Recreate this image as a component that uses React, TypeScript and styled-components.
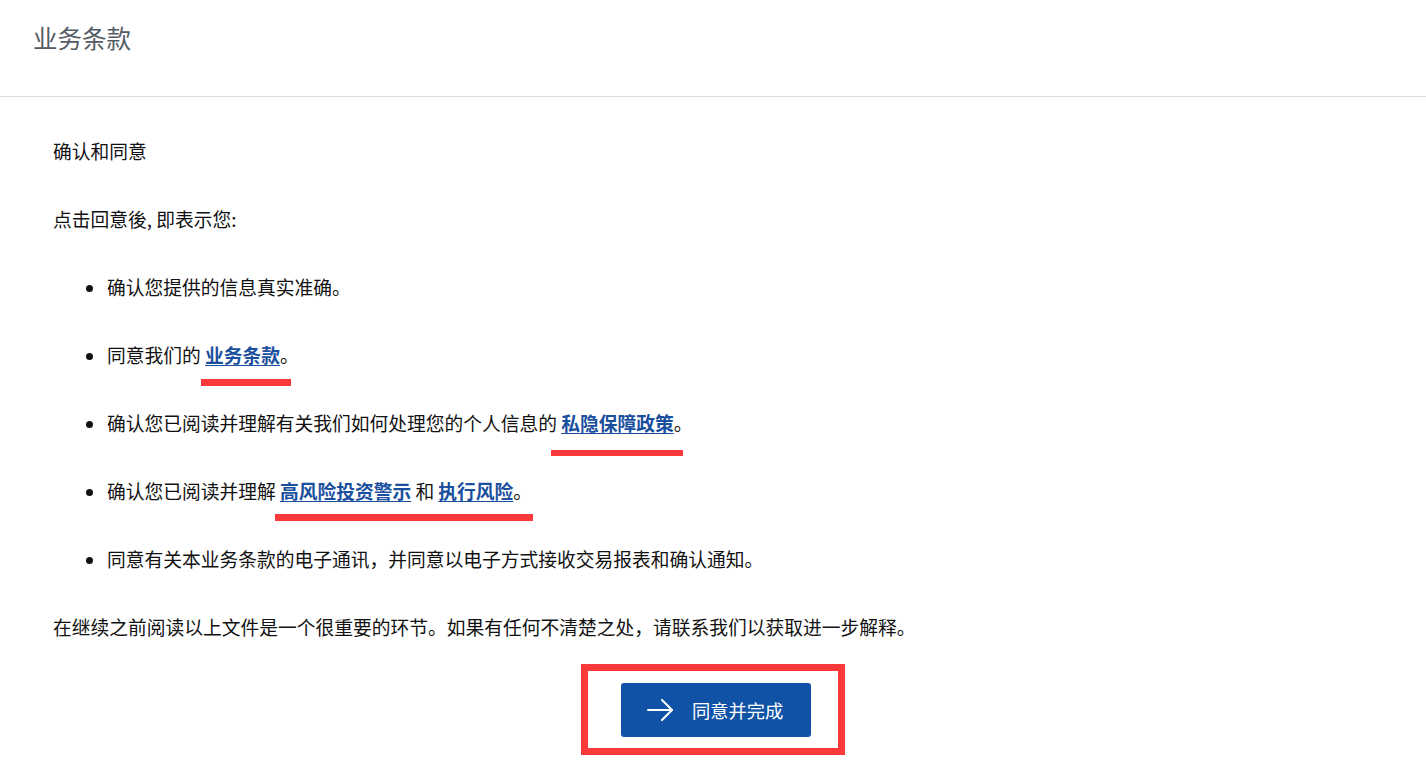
import styled, { createGlobalStyle } from 'styled-components';

const GlobalStyle = createGlobalStyle`
    html, body {
        margin: 0;
        padding: 0;
        background: #ffffff;
    }
    body {
        font-family: "Microsoft YaHei", "Noto Sans CJK SC", "Noto Sans", sans-serif;
        color: #111111;
    }
`

type Mark = { left: number; top: number; width: number; height: number };

const Term = ({ children, mark }: { children: string; mark: Mark }) => (
    <TermWrap>
        <Link href="#">{children}</Link>
        <RedMark $left={mark.left} $top={mark.top} $width={mark.width} $height={mark.height} />
    </TermWrap>
)

export default function App() {
    return (
        <>
            <GlobalStyle />
            <Page>
                <Header>
                    <Title>业务条款</Title>
                </Header>

                <Body>
                    <Para>确认和同意</Para>
                    <Para>点击回意後, 即表示您:</Para>

                    <List>
                        <Item>确认您提供的信息真实准确。</Item>
                        <Item>
                            同意我们的 <Term mark={{ left: -4, top: 38, width: 90, height: 7 }}>业务条款</Term>。
                        </Item>
                        <Item>
                            确认您已阅读并理解有关我们如何处理您的个人信息的{' '}
                            <Term mark={{ left: -10, top: 41, width: 132, height: 6 }}>私隐保障政策</Term>。
                        </Item>
                        <Item>
                            确认您已阅读并理解{' '}
                            <Term mark={{ left: -5, top: 37, width: 258, height: 7 }}>高风险投资警示</Term>{' '}
                            和 <Link href="#">执行风险</Link>。
                        </Item>
                        <Item>同意有关本业务条款的电子通讯，并同意以电子方式接收交易报表和确认通知。</Item>
                    </List>

                    <Para>在继续之前阅读以上文件是一个很重要的环节。如果有任何不清楚之处，请联系我们以获取进一步解释。</Para>

                    <ActionRow>
                        <Highlight>
                            <AgreeButton type="button">
                                <svg width="27" height="22" viewBox="0 0 27 22" fill="none">
                                    <path d="M1 11h24" stroke="#ffffff" strokeWidth="2" strokeLinecap="round" />
                                    <path d="M15 1l10 10-10 10" stroke="#ffffff" strokeWidth="2" strokeLinecap="round" strokeLinejoin="round" />
                                </svg>
                                同意并完成
                            </AgreeButton>
                        </Highlight>
                    </ActionRow>
                </Body>
            </Page>
        </>
    )
}

const Page = styled.div`
    width: 1426px;
    min-height: 780px;
    background: #ffffff;
`

const Header = styled.header`
    height: 97px;
    box-sizing: border-box;
    padding: 22px 33px 0;
    border-bottom: 1px solid #d6dae2;
`

const Title = styled.h1`
    margin: 0;
    font-size: 24.5px;
    line-height: 32px;
    font-weight: 400;
    color: #545b64;
`

const Body = styled.main`
    padding: 40px 53px 0;
    display: flex;
    flex-direction: column;
    gap: 40px;
    font-size: 18.75px;
    line-height: 28px;
`

const Para = styled.p`
    margin: 0;
`

const List = styled.ul`
    margin: 0;
    padding-left: 54px;
    display: flex;
    flex-direction: column;
    gap: 40px;
`

const Item = styled.li`
    list-style: disc;
`

const TermWrap = styled.span`
    position: relative;
    display: inline-block;
    height: 28px;
`

const Link = styled.a`
    color: #1a4f9e;
    font-weight: 700;
    text-decoration: underline;
    text-underline-offset: 2px;
`

const RedMark = styled.span<{ $left: number; $top: number; $width: number; $height: number }>`
    position: absolute;
    left: ${p => p.$left}px;
    top: ${p => p.$top}px;
    width: ${p => p.$width}px;
    height: ${p => p.$height}px;
    background: #fa3a3a;
`

const ActionRow = styled.div`
    display: flex;
    justify-content: center;
    margin-left: -53px;
    margin-right: -53px;
    margin-top: -17px;
`

const Highlight = styled.div`
    border: 7px solid #fa3a3a;
    padding: 12px 27px 11px 33px;
`

const AgreeButton = styled.button`
    width: 190px;
    height: 54px;
    box-sizing: border-box;
    display: flex;
    align-items: center;
    gap: 18px;
    padding: 0 0 0 26px;
    border: none;
    border-radius: 3px;
    background: #0f52a6;
    color: #ffffff;
    font-family: "Microsoft YaHei", "Noto Sans CJK SC", sans-serif;
    font-size: 18.3px;
    cursor: pointer;
`
